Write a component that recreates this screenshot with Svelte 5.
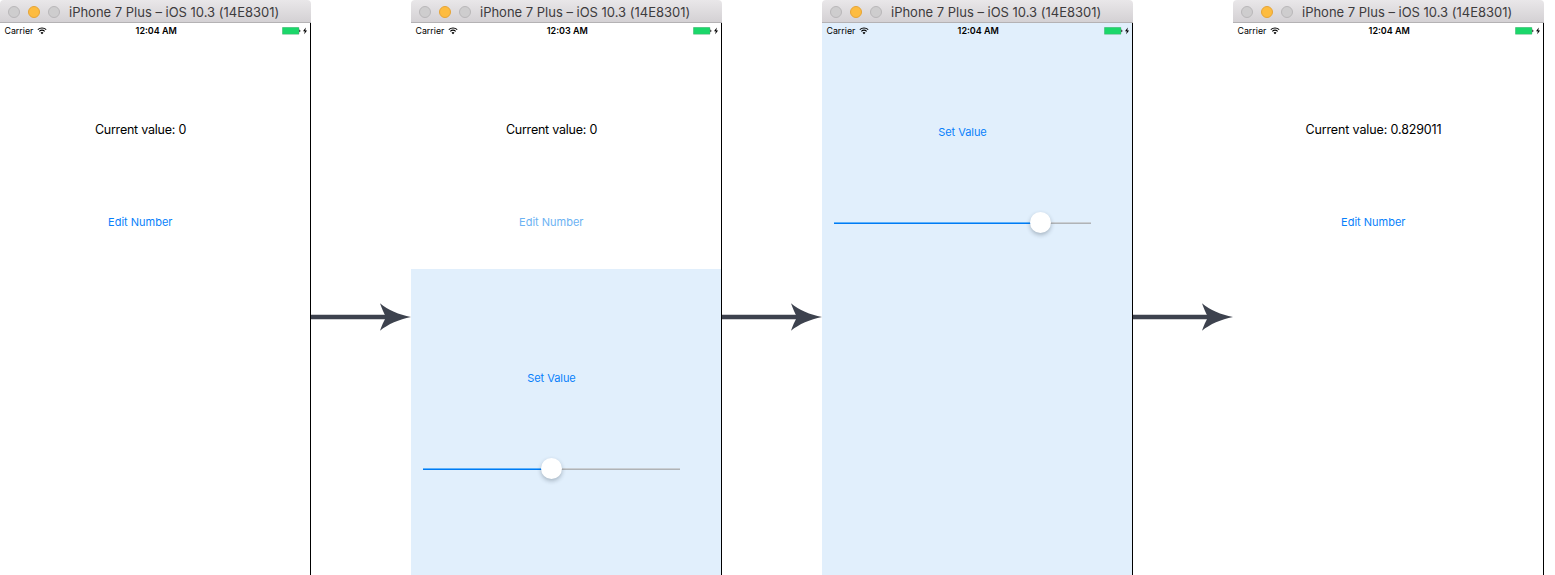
<script>
  const phones = [
    { time: '12:04 AM', label: 'Current value: 0', faded: false },
    { time: '12:03 AM', label: 'Current value: 0', faded: true, sheet: 'half', thumb: 128.5 },
    { time: '12:04 AM', sheet: 'full', thumb: 206.5 },
    { time: '12:04 AM', label: 'Current value: 0.829011', faded: false, long: true }
  ];
</script>

<main>
  {#each phones as p, i}
    {#if i > 0}
      <svg class="arrow" width="100" height="30" viewBox="0 0 100 30">
        <path d="M0 15H80" stroke="#3d424e" stroke-width="4.6" />
        <path d="M69 1.2C77 8 88 12.5 100 15C88 17.5 77 22 69 28.8C70.5 24 73 19 75 15C73 11 70.5 6 69 1.2Z" fill="#3d424e" />
      </svg>
    {/if}
    <section class="phone">
      <header class="titlebar">
        <i class="dot"></i><i class="dot amber"></i><i class="dot"></i>
        <span class="title">iPhone 7 Plus – iOS 10.3 (14E8301)</span>
      </header>
      <div class="screen" class:blue={p.sheet === 'full'}>
        <div class="status">
          <div class="left">
            <span class="carrier">Carrier</span>
            <svg width="10" height="8" viewBox="0 0 10 8" fill="none" stroke="#000" stroke-width="1.05">
              <path d="M.8 2.7A6.3 6.3 0 0 1 9.2 2.7M2.3 4.4A4 4 0 0 1 7.7 4.4" />
              <path d="M3.5 5.7A2.2 2.2 0 0 1 6.5 5.7L5 7.2Z" fill="#000" stroke="none" />
            </svg>
          </div>
          <span class="time">{p.time}</span>
          <svg class="battery" width="27" height="8" viewBox="0 0 27 8">
            <rect x=".3" y=".3" width="16.7" height="7" rx=".5" fill="#1bd76a" stroke="#5c9a76" stroke-width=".35" />
            <path d="M17.4 2.5C18.7 2.8 18.7 5 17.4 5.3Z" fill="#000" />
            <path d="M23.8.6L21 4.3H22.8L22.2 7.2L25.1 3.4H23.3Z" fill="#000" />
          </svg>
        </div>
        {#if p.label}
          <div class="label" class:long={p.long}>{p.label}</div>
          <div class="button" class:faded={p.faded}>Edit Number</div>
        {/if}
        {#if p.sheet}
          <div class="sheet {p.sheet}">
            <div class="button set">Set Value</div>
            <div class="slider">
              <div class="fill" style="width: {p.thumb}px"></div>
              <div class="thumb" style="left: {p.thumb}px"></div>
            </div>
          </div>
        {/if}
      </div>
    </section>
  {/each}
</main>

<style>
  :global(body) { background: #fff; overflow: hidden; }
  main { display: flex; width: 1555px; height: 575px; font-family: Inter, sans-serif; color: #000; }
  .phone { width: 311px; height: 575px; flex: none; display: flex; flex-direction: column; }
  .arrow { flex: none; margin-top: 302px; }
  .titlebar {
    box-sizing: border-box; height: 23px; flex: none; display: flex; align-items: center;
    padding: 2px 0 0 8px; gap: 8px; border-bottom: 1px solid #b4b2b4; border-radius: 4px 4px 0 0;
    background: linear-gradient(#e9e7e9, #d4d1d4);
  }
  .dot { box-sizing: border-box; width: 12px; height: 12px; flex: none; border-radius: 50%; background: #cecdce; border: 1px solid #b9b7b9; }
  .amber { background: #fdbc40; border-color: #e6a436; }
  .title { margin-left: 1px; font-size: 13px; line-height: 18px; letter-spacing: -.01px; color: #3d3b3d; white-space: nowrap; }
  .screen { flex: 1; border-right: 1px solid #000; display: flex; flex-direction: column; background: #fff; }
  .screen.blue { background: #e1effc; }
  .status { display: grid; grid-template-columns: 1fr auto 1fr; height: 16px; align-items: center; padding: 0 1px 0 4.5px; font-size: 9px; line-height: 16px; }
  .left { display: flex; align-items: center; gap: 3.5px; }
  .carrier { font-size: 8.8px; }
  .time { font-weight: 600; font-size: 9px; margin-right: 1px; }
  .battery { justify-self: end; }
  .label { width: 281px; margin-top: 81px; text-align: center; font-size: 12.5px; line-height: 20px; letter-spacing: -.23px; }
  .long { letter-spacing: -.13px; }
  .button { width: 280.5px; margin-top: 74px; text-align: center; font-size: 11px; line-height: 16px; color: #087ffb; }
  .faded { color: #6bb2f3; }
  .sheet { background: #e1effc; flex: 1; }
  .half { margin-top: 39px; }
  .sheet .set { margin-top: 0; padding-top: 101px; width: 281px; letter-spacing: -.05px; }
  .sheet.full .set { padding-top: 85px; }
  .slider { position: relative; width: 257px; height: 2px; margin: 82px 0 0 12px; background: linear-gradient(#cacfd4 50%, #afb3b7 50%); }
  .fill { height: 2px; background: linear-gradient(#60b2fa 50%, #007bf4 50%); }
  .thumb { position: absolute; top: -10.5px; width: 21.5px; height: 21.5px; margin-left: -10.75px; border-radius: 50%; background: #fff; box-shadow: 0 2px 4px rgba(40, 55, 70, .32); }
</style>
